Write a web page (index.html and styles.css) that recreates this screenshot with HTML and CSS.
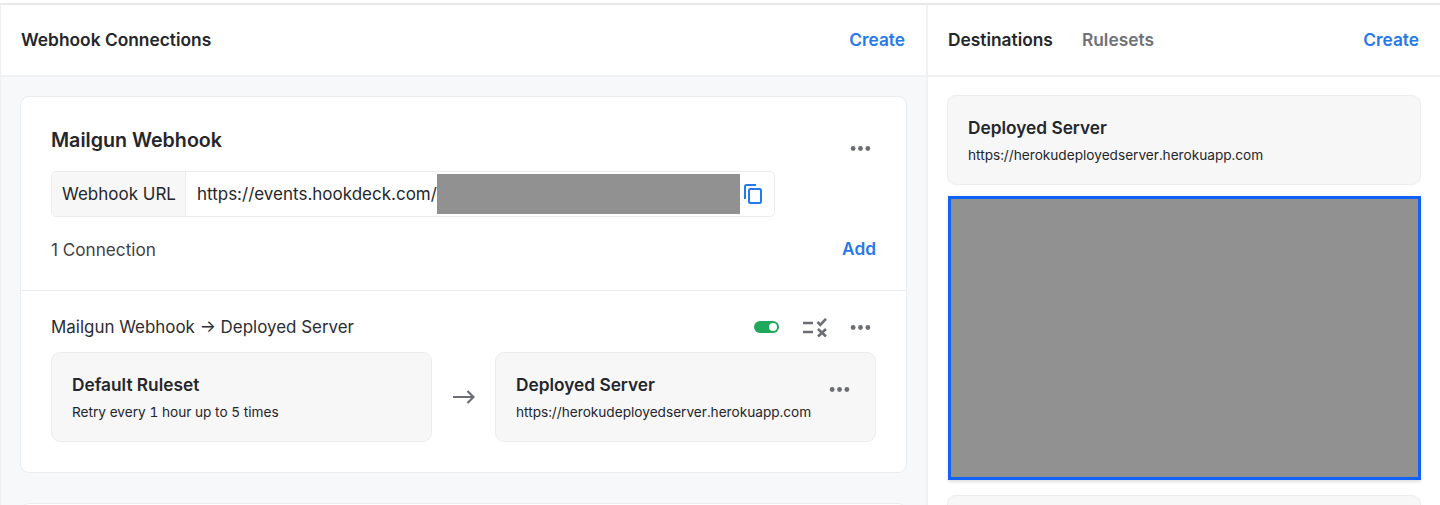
FILE: index.html
```html
<!DOCTYPE html>
<html lang="en">
<head>
<meta charset="utf-8">
<title>Webhook Connections</title>
<link rel="stylesheet" href="styles.css">
</head>
<body>
<div class="app">
  <section class="panel left">
    <header class="bar">
      <h2 class="bar-title">Webhook Connections</h2>
      <a class="link">Create</a>
    </header>
    <div class="left-body">
      <article class="card">
        <div class="card-top">
          <div class="title-row">
            <h1 class="source-name">Mailgun Webhook</h1>
            <svg class="dots dots-source" viewBox="0 0 20 6"><circle cx="3" cy="3" r="2.3"/><circle cx="10" cy="3" r="2.3"/><circle cx="17" cy="3" r="2.3"/></svg>
          </div>
          <div class="url-box">
            <span class="url-label">Webhook URL</span>
            <span class="url-value">https://events.hookdeck.com/</span>
            <span class="redact"></span>
            <svg class="copy" viewBox="0 0 18 20" fill="none"><path d="M12 1H2.500A1.500 1.500 0 0 0 1 2.500V15"/><rect x="5" y="5" width="12" height="14" rx="1.500"/></svg>
          </div>
          <div class="count-row">
            <span class="count">1 Connection</span>
            <a class="link">Add</a>
          </div>
        </div>
        <div class="card-bottom">
          <div class="conn-row">
            <span class="conn-name">Mailgun Webhook → Deployed Server</span>
            <div class="conn-actions">
              <span class="toggle"><span class="knob"></span></span>
              <svg class="rules" viewBox="0 0 24 19" fill="none"><path d="M0 5H10M0 14H10M14.500 4l2.800 2.800L23 .8M15 11l8 7.500M23 11l-8 7.500"/></svg>
              <svg class="dots dots-row" viewBox="0 0 20 6"><circle cx="3" cy="3" r="2.300"/><circle cx="10" cy="3" r="2.300"/><circle cx="17" cy="3" r="2.300"/></svg>
            </div>
          </div>
          <div class="flow">
            <div class="tile">
              <h3 class="tile-title">Default Ruleset</h3>
              <p class="tile-text">Retry every 1 hour up to 5 times</p>
            </div>
            <svg class="arrow" viewBox="0 0 22 14" fill="none"><path d="M0 7H20.500M14.500 1 20.500 7l-6 6"/></svg>
            <div class="tile tile-menu">
              <h3 class="tile-title">Deployed Server</h3>
              <p class="tile-text">https://herokudeployedserver.herokuapp.com</p>
              <svg class="dots dots-tile" viewBox="0 0 20 6"><circle cx="3" cy="3" r="2.300"/><circle cx="10" cy="3" r="2.300"/><circle cx="17" cy="3" r="2.300"/></svg>
            </div>
          </div>
        </div>
      </article>
      <article class="card card-next"></article>
    </div>
  </section>
  <section class="panel right">
    <header class="bar">
      <nav class="tabs">
        <h2 class="bar-title">Destinations</h2>
        <h2 class="bar-title muted">Rulesets</h2>
      </nav>
      <a class="link">Create</a>
    </header>
    <div class="right-body">
      <div class="tile dest">
        <h3 class="tile-title">Deployed Server</h3>
        <p class="tile-text">https://herokudeployedserver.herokuapp.com</p>
      </div>
      <div class="selected"></div>
      <div class="tile dest"></div>
    </div>
  </section>
</div>
</body>
</html>
```
FILE: styles.css
```css
* { box-sizing: border-box; }
html, body { margin: 0; height: 505px; overflow: hidden; background: #fff; }
body { font-family: Inter, "Liberation Sans", sans-serif; color: #24262b; }
h1, h2, h3, p { margin: 0; }

.app {
  display: grid;
  grid-template-columns: 926px 1fr;
  height: 505px;
  margin-top: 3px;
  border-top: 2px solid #e8e9eb;
  overflow: hidden;
}
.panel { min-width: 0; }
.left { border-left: 1px solid #eff0f2; }
.right { border-left: 2px solid #f0f1f3; }

.bar {
  display: flex;
  align-items: center;
  justify-content: space-between;
  height: 72px;
  padding: 0 21px 0 20px;
  border-bottom: 2px solid #f0f1f3;
}
.bar-title { font-size: 17.350px; font-weight: 600; line-height: 20px; }
.muted { color: #6f7278; }
.tabs { display: flex; gap: 29px; }
.link { color: #2579ea; font-size: 17.300px; font-weight: 600; line-height: 20px; }

.left-body { background: #f7f8fa; height: 440px; padding: 19px 19px 0; }
.card {
  background: #fff;
  border: 1px solid #ebecee;
  border-radius: 9px;
  margin-bottom: 30px;
}
.card-next { height: 60px; }
.card-top { padding: 30px 30px 30px; height: 194px; border-bottom: 1px solid #ebecee; }
.title-row { display: flex; justify-content: space-between; align-items: center; height: 26px; }
.source-name { font-size: 19.650px; font-weight: 600; line-height: 26px; }
.dots { width: 21px; height: 7px; fill: #6b6e75; display: block; flex: none; }
.dots-source { margin-top: 17px; margin-right: 5px; }
.dots-row { margin-right: 5px; }

.url-box {
  display: flex;
  align-items: center;
  width: 724px;
  height: 46px;
  margin-top: 18px;
  border: 1px solid #ebecee;
  border-radius: 5px;
  overflow: hidden;
}
.url-label {
  display: flex;
  align-items: center;
  height: 100%;
  padding: 0 9px 0 10px;
  background: #f7f7f8;
  border-right: 1px solid #ebecee;
  font-size: 17px;
}
.url-value { font-size: 17px; padding-left: 11px; white-space: nowrap; }
.redact { width: 303px; height: 40px; background: #919191; flex: none; }
.copy { width: 18px; height: 20px; margin-left: 4px; stroke: #2579ea; stroke-width: 2; flex: none; }

.count-row { display: flex; justify-content: space-between; align-items: center; margin-top: 22px; height: 20px; }
.count { font-size: 17.150px; color: #3f4147; }

.card-bottom { padding: 26px 30px 30px; }
.conn-row { display: flex; justify-content: space-between; align-items: center; height: 20px; }
.conn-name { font-size: 16.950px; color: #2b2d32; }
.conn-actions { display: flex; align-items: center; gap: 23px; }
.toggle {
  display: flex;
  align-items: center;
  justify-content: flex-end;
  width: 25px;
  height: 12px;
  margin-right: 1px;
  padding-right: 2px;
  border-radius: 6px;
  background: #1fa85a;
}
.knob { width: 8px; height: 8px; border-radius: 50%; background: #fff; }
.rules { width: 24px; height: 19px; stroke: #6b6e75; stroke-width: 2.600; flex: none; }

.flow { display: flex; align-items: center; margin-top: 15px; }
.tile {
  flex: 1;
  height: 90px;
  padding: 22px 20px 0;
  background: #f7f7f8;
  border: 1px solid #ededef;
  border-radius: 9px;
}
.tile-title { font-size: 17.300px; font-weight: 600; line-height: 20px; }
.tile-text { font-size: 13.650px; line-height: 18px; margin-top: 8px; color: #24262b; white-space: nowrap; font-feature-settings: "tnum"; }
.arrow { width: 22px; height: 14px; margin: 0 20px 0 21px; stroke: #6b6e75; stroke-width: 2.200; flex: none; }
.tile-menu { position: relative; }
.dots-tile { position: absolute; top: 33px; right: 25px; }

.right-body { padding: 18px 19px 0; height: 440px; }
.dest { height: 90px; }
.selected {
  height: 284px;
  margin: 11px 0 15px 1px;
  background: #919191;
  border: 3px solid #0f62f5;
  box-shadow: 0 2px 3px rgba(0, 0, 0, .12);
}
```
